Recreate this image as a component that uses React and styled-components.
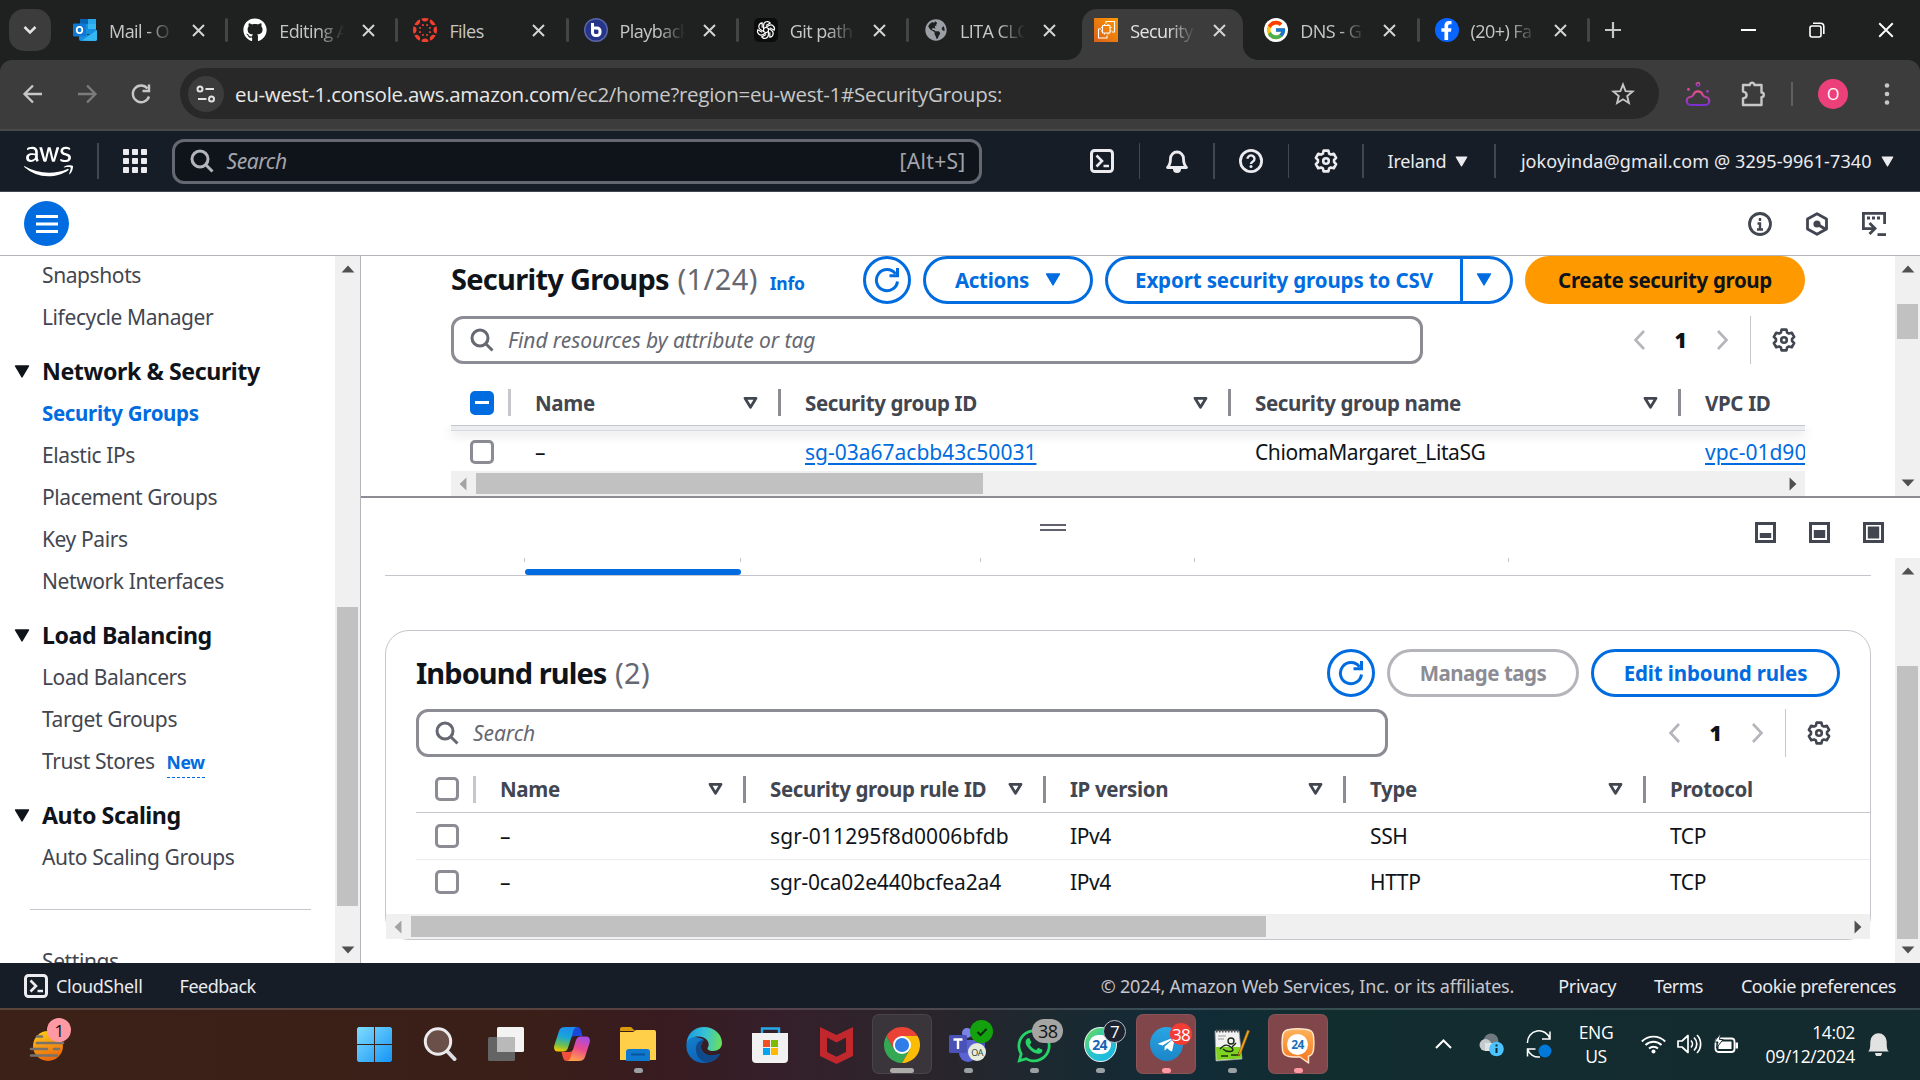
import React from "react";
import styled, { createGlobalStyle, css } from "styled-components";
import { FaGithub, FaAws, FaWhatsapp, FaFacebookF, FaTelegramPlane, FaGlobeAmericas } from "react-icons/fa";
import { FcGoogle } from "react-icons/fc";

const ember = `"Noto Sans", "Open Sans", sans-serif`;
const segoe = `"Open Sans", "Noto Sans", sans-serif`;

const Global = createGlobalStyle`
  * { box-sizing: border-box; }
  html, body { margin: 0; padding: 0; background: #fff; }
  body { width: 1920px; height: 1080px; overflow: hidden; }
  svg { display: block; flex: none; }
`;

const Screen = styled.div`
  width: 1920px;
  height: 1080px;
  display: flex;
  flex-direction: column;
  overflow: hidden;
  background: #fff;
  font-family: ${ember};
  font-size: 21px;
  letter-spacing: -0.4px;
  color: #0f141a;
  white-space: nowrap;
`;

/* ---------- Browser chrome ---------- */

const TabStrip = styled.div`
  height: 60px;
  flex: none;
  display: flex;
  align-items: flex-start;
  background: #1f2120;
  font-family: ${segoe};
`;
const TabSearch = styled.div`
  width: 42px;
  height: 42px;
  margin: 9px 7px 0 9px;
  border-radius: 15px;
  background: #3c3c3c;
  display: grid;
  place-items: center;
`;
const Tab = styled.div`
  position: relative;
  width: 170.2px;
  height: 51px;
  margin-top: 9px;
  padding: 0 0 9px 15px;
  display: flex;
  align-items: center;
  color: ${(p) => (p.$active ? "#e3e3e3" : "#c7c7c7")};
`;
const ActiveShape = styled.svg`
  position: absolute;
  left: -12px;
  top: 0;
`;
const TabIcon = styled.span`
  position: relative;
  width: 24px;
  height: 24px;
  display: grid;
  place-items: center;
`;
const TabTitle = styled.span`
  position: relative;
  margin-left: 12px;
  width: 76px;
  overflow: hidden;
  font-size: 18px;
  line-height: 30px;
  padding-top: 2px;
  letter-spacing: -0.55px;
  ${(p) => p.$fade && css`mask-image: linear-gradient(90deg, #000 50%, transparent 86%);`}
`;
const TabClose = styled.span`
  position: relative;
  margin-left: 7px;
`;
const TabDivider = styled.span`
  width: 3px;
  height: 24px;
  margin-left: auto;
  border-radius: 2px;
  background: #444645;
  visibility: ${(p) => (p.$hidden ? "hidden" : "visible")};
`;
const NewTab = styled.div`
  margin: 22px 0 0 15px;
`;
const WindowButtons = styled.div`
  margin-left: auto;
  height: 60px;
  display: flex;
  & > span {
    width: 68.5px;
    display: grid;
    place-items: center;
  }
`;
const ToolbarBack = styled.div`
  flex: none;
  background: #1f2120;
`;
const Toolbar = styled.div`
  height: 71px;
  display: flex;
  align-items: center;
  padding: 0 0 2px 20px;
  background: #3c3c3c;
  border-bottom: 2px solid #474a49;
  border-radius: 12px 12px 0 0;
`;
const NavIcons = styled.div`
  display: flex;
  gap: 28px;
  width: 160px;
`;
const Omnibox = styled.div`
  width: 1479px;
  height: 51px;
  padding: 0 24px 0 8px;
  display: flex;
  align-items: center;
  border-radius: 26px;
  background: #282828;
  font-family: ${segoe};
  font-size: 20.5px;
  letter-spacing: -0.27px;
  color: #c7c7c7;
  b {
    font-weight: 400;
    color: #e8e8e8;
  }
  & > svg {
    margin-left: auto;
  }
`;
const SiteInfo = styled.span`
  width: 36px;
  height: 36px;
  margin-right: 11px;
  border-radius: 50%;
  background: #3c3c3c;
  display: grid;
  place-items: center;
`;
const ToolbarRight = styled.div`
  flex: 1;
  display: flex;
  align-items: center;
  padding-left: 26px;
`;
const Bar = styled.i`
  width: ${(p) => p.$w || 1.5}px;
  height: ${(p) => p.$h}px;
  margin: 0 ${(p) => p.$r || 0}px 0 ${(p) => p.$l || 0}px;
  background: ${(p) => p.$c || "#424650"};
  flex: none;
`;
const PuzzleIcon = styled.svg`
  margin-left: 28px;
`;
const Avatar = styled.span`
  width: 30px;
  height: 30px;
  margin: 0 36px 0 25px;
  border-radius: 50%;
  background: #ec407a;
  color: #fff;
  display: grid;
  place-items: center;
  font: 16px ${segoe};
`;

/* ---------- AWS header ---------- */

const AwsHeader = styled.header`
  height: 61px;
  flex: none;
  display: flex;
  align-items: center;
  padding-left: 24px;
  background: #161d26;
  border-bottom: 1px solid #424650;
  color: #ebebf0;
  font-size: 18px;
  letter-spacing: 0.1px;
`;
const HeaderSearch = styled.div`
  width: 810px;
  height: 45px;
  margin: 0 84px 0 25px;
  padding: 0 13px 0 15px;
  display: flex;
  align-items: center;
  border: 3px solid #656871;
  border-radius: 12px;
  background: #0f141a;
  color: #a4a4ad;
  font-size: 21px;
  em {
    margin-left: 13px;
    letter-spacing: -0.4px;
  }
  span {
    margin-left: auto;
    letter-spacing: 0.3px;
  }
`;
const HeaderIcon = styled.span`
  width: 73px;
  display: grid;
  place-items: center;
`;
const Menu = styled.span`
  display: flex;
  align-items: center;
  gap: 9px;
  margin-left: ${(p) => p.$l}px;
  letter-spacing: ${(p) => p.$ls || 0}px;
`;

const ServiceBar = styled.div`
  height: 64px;
  flex: none;
  display: flex;
  align-items: center;
  justify-content: space-between;
  padding: 0 34px 0 24px;
  border-bottom: 1px solid #b4b4bb;
`;
const MenuButton = styled.span`
  width: 45px;
  height: 45px;
  border-radius: 50%;
  background: #006ce0;
  display: grid;
  place-items: center;
`;
const ServiceIcons = styled.div`
  display: flex;
  gap: 33px;
`;

/* ---------- Body ---------- */

const Body = styled.div`
  height: 707px;
  flex: none;
  display: flex;
  overflow: hidden;
`;
const Nav = styled.nav`
  width: 335px;
  height: 707px;
  overflow: hidden;
  padding-left: 42px;
  color: #424650;
`;
const NavList = styled.div`
  margin-top: -2px;
`;
const NavItem = styled.div`
  height: 42px;
  line-height: 42px;
  ${(p) =>
    p.$active &&
    css`
      font-size: 20.5px;
      font-weight: 700;
      letter-spacing: -0.33px;
      color: #006ce0;
    `}
`;
const NewBadge = styled.span`
  display: inline-block;
  margin-left: 12px;
  line-height: 29px;
  font-size: 17.5px;
  font-weight: 700;
  color: #006ce0;
  border-bottom: 1.5px dashed #006ce0;
`;
const NavHeading = styled.div`
  height: 43px;
  margin: 11px 0 0 -28px;
  display: flex;
  align-items: center;
  gap: 12px;
  font-size: 23.2px;
  font-weight: 700;
  letter-spacing: -0.43px;
  color: #0f141a;
  svg {
    margin-top: 1px;
  }
`;
const NavRule = styled.div`
  width: 281px;
  height: 1px;
  margin: 31px 0 30px -12px;
  background: #c6c6cd;
`;
const VTrack = styled.div`
  width: 25px;
  flex: none;
  display: flex;
  flex-direction: column;
  align-items: center;
  background: #f0f0f0;
  padding: 9px 0;
`;
const VThumb = styled.div`
  width: 21px;
  height: ${(p) => p.$h}px;
  margin-top: ${(p) => p.$top}px;
  margin-bottom: auto;
  background: #c1c1c1;
`;
const HTrack = styled.div`
  height: 25px;
  display: flex;
  align-items: center;
  justify-content: space-between;
  padding: 0 5px;
  background: #f0f0f0;
`;
const HThumb = styled.div`
  width: ${(p) => p.$w}px;
  height: 21px;
  margin: 0 auto 0 6px;
  background: #c1c1c1;
`;
const Main = styled.main`
  flex: 1;
  min-width: 0;
  display: flex;
  flex-direction: column;
  border-left: 1px solid #b4b4bb;
`;
const TopPanel = styled.section`
  height: 242px;
  display: flex;
  border-bottom: 2px solid #8c8c94;
`;
const TopContent = styled.div`
  flex: 1;
  min-width: 0;
  padding: 0 90px;
`;
const TitleRow = styled.div`
  height: 48px;
  display: flex;
  align-items: center;
  gap: 12px;
`;
const Title = styled.h2`
  margin: ${(p) => p.$dy || 0}px auto 0 0;
  font-size: 29px;
  line-height: 46px;
  font-weight: 700;
  letter-spacing: ${(p) => p.$ls}px;
  span {
    margin-left: 8.5px;
    font-weight: 400;
    color: #656871;
    letter-spacing: 0.4px;
  }
  small {
    margin-left: 12px;
    font-size: 17.5px;
    letter-spacing: -0.2px;
    color: #006ce0;
  }
`;
const Button = styled.span`
  height: 48px;
  width: ${(p) => p.$w}px;
  display: flex;
  align-items: center;
  justify-content: center;
  gap: 16px;
  border: 3px solid ${(p) => (p.$kind === "disabled" ? "#b4b4bb" : p.$kind === "primary" ? "#ff9900" : "#006ce0")};
  border-radius: 24px;
  background: ${(p) => (p.$kind === "primary" ? "#ff9900" : "#fff")};
  color: ${(p) => (p.$kind === "disabled" ? "#8c8c94" : p.$kind === "primary" ? "#0f141a" : "#006ce0")};
  font-size: 20.5px;
  font-weight: 700;
  line-height: 28px;
  padding-bottom: 1px;
  letter-spacing: ${(p) => p.$ls ?? -0.36}px;
`;
const SplitButton = styled.div`
  display: flex;
  & > ${Button}:first-child {
    border-radius: 24px 0 0 24px;
    border-right: 0;
  }
  & > ${Button}:last-child {
    border-radius: 0 24px 24px 0;
    padding-right: 6px;
  }
`;
const FilterRow = styled.div`
  height: 48px;
  margin-top: 12px;
  display: flex;
  align-items: center;
`;
const Filter = styled.div`
  width: 972px;
  height: 48px;
  padding: 0 0 1px 16px;
  display: flex;
  align-items: center;
  gap: 14px;
  border: 3px solid #8c8c94;
  border-radius: 12px;
  color: #656871;
  font-style: italic;
  letter-spacing: -0.07px;
`;
const PagerRow = styled.div`
  margin-left: auto;
  display: flex;
  align-items: center;
  padding-right: 9px;
  font-weight: 700;
`;
const PageNumber = styled.b`
  width: 70px;
  text-align: center;
`;
const Spacer = styled.div`
  height: ${(p) => p.$h}px;
`;
const TableHead = styled.div`
  display: flex;
  align-items: center;
  height: ${(p) => p.$h}px;
  padding-bottom: ${(p) => p.$pb || 0}px;
  border-bottom: 1px solid #c6c6cd;
  overflow: hidden;
  font-size: 20.5px;
  font-weight: 700;
  color: #424650;
`;
const TableRow = styled.div`
  display: flex;
  align-items: center;
  height: ${(p) => p.$h}px;
  padding-top: ${(p) => p.$pt || 0}px;
  overflow: hidden;
  border-bottom: ${(p) => (p.$line ? "1px solid #ebebf0" : "0")};
`;
const CheckCell = styled.span`
  width: 60px;
  flex: none;
  padding-left: 19px;
  display: flex;
  align-items: center;
  justify-content: space-between;
`;
const Check = styled.span`
  width: 24px;
  height: 24px;
  border: 3px solid ${(p) => (p.$on ? "#006ce0" : "#8c8c94")};
  border-radius: 5px;
  background: ${(p) => (p.$on ? "#006ce0" : "#fff")};
  display: grid;
  place-items: center;
  &::after {
    content: "";
    width: 14px;
    height: 3px;
    background: ${(p) => (p.$on ? "#fff" : "transparent")};
  }
`;
const Cell = styled.span`
  width: ${(p) => p.$w}px;
  flex: none;
  padding-left: 24px;
  letter-spacing: ${(p) => p.$ls ?? -0.4}px;
  display: flex;
  align-items: center;
  & > svg {
    margin: 0 19px 0 auto;
  }
`;
const Link = styled.a`
  color: #006ce0;
  text-decoration: underline;
  text-decoration-thickness: 2px;
  text-underline-offset: 3px;
`;
const StickyShade = styled.div`
  height: 5px;
  background: #ebedf0;
  border-bottom: 1px solid #d5dae2;
  box-shadow: 0 3px 12px rgba(0, 7, 22, 0.16);
  clip-path: inset(0 -20px -18px -20px);
`;
const BottomPanel = styled.section`
  height: 465px;
  display: flex;
  flex-direction: column;
`;
const SplitBar = styled.div`
  height: 60px;
  display: flex;
  align-items: flex-start;
  justify-content: flex-end;
  padding: 24px 36px 0 0;
`;
const Handle = styled.div`
  width: 26px;
  height: 7px;
  margin: 2px 689px 0 0;
  border: solid #5f626c;
  border-width: 2px 0;
`;
const PanelSizes = styled.div`
  display: flex;
  gap: 33px;
`;
const SplitScroll = styled.div`
  flex: 1;
  display: flex;
  min-height: 0;
`;
const SplitContent = styled.div`
  flex: 1;
  min-width: 0;
  padding: 0 24px;
`;
const TabsEdge = styled.div`
  height: 18px;
  display: flex;
  border-bottom: 1px solid #c6c6cd;
`;
const EdgeTab = styled.span`
  width: ${(p) => p.$w}px;
  height: 17px;
  display: flex;
  align-items: flex-end;
  background: linear-gradient(#c6c6cd, #c6c6cd) right top / 1px 4px no-repeat;
  &::after {
    content: "";
    flex: 1;
    height: 6px;
    border-radius: 3px;
    background: ${(p) => (p.$active ? "#006ce0" : "transparent")};
  }
`;
const Card = styled.div`
  height: 310px;
  margin-top: 54px;
  border: 1px solid #c6c6cd;
  border-radius: 24px;
`;
const CardInner = styled.div`
  height: 283px;
  padding: 18px 0 0 30px;
`;
const CardControls = styled.div`
  padding-right: 30px;
`;

/* ---------- AWS footer ---------- */

const Footer = styled.footer`
  height: 45px;
  flex: none;
  display: flex;
  align-items: center;
  padding: 1px 24px 0;
  background: #161d26;
  color: #ebebf0;
  font-size: 18px;
`;
const FooterText = styled.span`
  margin-left: ${(p) => (p.$push ? "auto" : `${p.$l}px`)};
  padding-bottom: ${(p) => p.$up || 0}px;
  letter-spacing: ${(p) => p.$ls ?? -0.3}px;
  color: ${(p) => (p.$push ? "#c6c6cd" : "inherit")};
`;

/* ---------- Windows taskbar ---------- */

const Taskbar = styled.div`
  height: 72px;
  flex: none;
  display: flex;
  align-items: flex-start;
  padding-top: 4px;
  border-top: 2px solid rgba(255, 255, 255, 0.16);
  background: linear-gradient(90deg, #3b2117 0, #3a1f18 520px, #381b20 660px, #34202b 790px, #29252c 940px, #1b2930 1060px, #112b38 1180px, #112d2e 1330px, #132c30 1500px, #132a2e 1920px);
  font-family: ${segoe};
  color: #fff;
`;
const Weather = styled.div`
  position: relative;
  width: 344px;
  flex: none;
  padding: 16px 0 0 29px;
`;
const Badge = styled.span`
  position: absolute;
  left: ${(p) => p.$x}px;
  top: ${(p) => p.$y}px;
  min-width: ${(p) => p.$s}px;
  height: ${(p) => p.$s}px;
  padding: 0 ${(p) => p.$p || 0}px;
  border-radius: ${(p) => p.$s / 2}px;
  background: ${(p) => p.$bg};
  color: ${(p) => p.$c};
  border: ${(p) => p.$border || "0"};
  display: grid;
  place-items: center;
  font-size: ${(p) => p.$fs || 17}px;
  line-height: 1;
  letter-spacing: -0.6px;
`;
const Tile = styled.div`
  position: relative;
  width: 60px;
  height: 60px;
  flex: none;
  margin-right: 6px;
  padding-top: 12px;
  display: flex;
  flex-direction: column;
  align-items: center;
  justify-content: space-between;
  border-radius: 7px;
  background: ${(p) => p.$bg || "transparent"};
  border: 1px solid ${(p) => (p.$bg ? "rgba(255,255,255,.08)" : "transparent")};
`;
const Running = styled.i`
  width: ${(p) => p.$w || 9}px;
  height: 5px;
  border-radius: 3px;
  background: ${(p) => p.$c || "#9ba0a3"};
`;
const Tray = styled.div`
  flex: 1;
  height: 60px;
  display: flex;
  align-items: center;
  padding-left: 85px;
  font-size: 17.5px;
  line-height: 24px;
  letter-spacing: -0.35px;
`;
const TraySlot = styled.span`
  width: ${(p) => p.$w || 48}px;
  flex: none;
  display: grid;
  justify-items: ${(p) => p.$j || "center"};
`;

/* ---------- Icons ---------- */

const Close = ({ s = 13, c = "#d4d4d4", w = 2 }) => (
  <svg width={s} height={s} viewBox="0 0 13 13"><path d="M1 1 12 12M12 1 1 12" stroke={c} strokeWidth={w} fill="none" /></svg>
);
const Caret = ({ c = "currentColor", w = 16, h = 13 }) => (
  <svg width={w} height={h} viewBox="0 0 16 13"><path d="M1.5 1h13L8 12z" fill={c} stroke={c} strokeWidth="1.4" strokeLinejoin="round" /></svg>
);
const Sort = () => (
  <svg width="17" height="14" viewBox="0 0 17 14"><path d="M3 2.3h11L8.5 11.2z" fill="none" stroke="#424650" strokeWidth="2.8" strokeLinejoin="round" /></svg>
);
const Search = ({ c = "#656871" }) => (
  <svg width="24" height="24" viewBox="0 0 24 24"><g fill="none" stroke={c} strokeWidth="3"><circle cx="10" cy="10" r="8" /><path d="m15.5 15.5 7 7" /></g></svg>
);
const gearPath = (() => {
  const profile = [[-13, 10.6], [13, 10.6], [23, 8.1], [37, 8.1]];
  let d = "";
  for (let k = 0; k < 6; k++) {
    profile.forEach(([off, r], i) => {
      const a = ((k * 60 + off - 90) * Math.PI) / 180;
      d += `${k === 0 && i === 0 ? "M" : "L"}${(12 + r * Math.cos(a)).toFixed(2)} ${(12 + r * Math.sin(a)).toFixed(2)}`;
    });
  }
  return d + "Z";
})();
const Gear = ({ c = "#424650" }) => (
  <svg width="24" height="24" viewBox="0 0 24 24"><g fill="none" stroke={c} strokeWidth="2.6" strokeLinejoin="round"><path d={gearPath} /><circle cx="12" cy="12" r="2.8" /></g></svg>
);
const Shell = () => (
  <svg width="24" height="24" viewBox="0 0 24 24"><rect x="1.5" y="1.5" width="21" height="21" rx="3" fill="none" stroke="#ebebf0" strokeWidth="3" /><path d="m6.5 6.5 5.5 5.5-5.5 5.5M13.5 17h5.5" fill="none" stroke="#ebebf0" strokeWidth="2.6" /></svg>
);
const Arrow = ({ r = 0 }) => (
  <svg width="14" height="8" viewBox="0 0 12 7" transform={`rotate(${r})`}><path d="M6 .5 11.6 6.5H.4z" fill={r === -90 ? "#a3a3a3" : "#505050"} /></svg>
);
const Refresh = () => (
  <svg width="26" height="26" viewBox="0 0 26 26"><g fill="none" stroke="#006ce0" strokeWidth="3"><path d="M23.5 14.5A10.6 10.6 0 1 1 21.5 6.8" /><path d="M23.5 1v7.7h-8" /></g></svg>
);
const Chevron = ({ right }) => (
  <svg width="13" height="20" viewBox="0 0 13 20"><path d={right ? "m2 1 8.5 9-8.5 9" : "M11 1 2.5 10l8.5 9"} fill="none" stroke="#b4b4bb" strokeWidth="2.6" /></svg>
);
const PanelIcon = ({ y, h }) => (
  <svg width="21" height="21" viewBox="0 0 21 21"><rect x="1.5" y="1.5" width="18" height="18" fill="none" stroke="#424650" strokeWidth="3" /><rect x="4.8" y={y} width="11.4" height={h} fill="#424650" /></svg>
);

const Outlook = () => (
  <svg width="24" height="24" viewBox="0 0 24 24">
    <rect x="7" y="1" width="16" height="15" rx="1" fill="#1490df" /><path d="M7 1h8v5H7z" fill="#0a63b0" /><path d="M15 6h8v5h-8z" fill="#35b8f1" /><path d="M15 1h8v5h-8z" fill="#28a8ea" />
    <path d="M6 12l9 5 9-5v9a2 2 0 0 1-2 2H8a2 2 0 0 1-2-2z" fill="#1a8fe0" /><path d="m24 12-15 10.500L22 23a2 2 0 0 0 2-2z" fill="#35b8f1" />
    <rect x="0" y="5.500" width="13" height="13" rx="1.200" fill="#0f78d4" /><ellipse cx="6.500" cy="12" rx="2.800" ry="3.200" fill="none" stroke="#fff" strokeWidth="1.700" />
  </svg>
);
const CanvasLogo = () => (
  <svg width="24" height="24" viewBox="0 0 24 24" fill="#f23f2f">
    {[0, 45, 90, 135, 180, 225, 270, 315].map((a) => (
      <g key={a} transform={`rotate(${a} 12 12)`}><path d="M8.300.600a12 12 0 0 1 7.400 0A3.800 3.800 0 0 1 8.300.600z" /><circle cx="12" cy="6.600" r="1" transform="rotate(22.500 12 12)" /></g>
    ))}
  </svg>
);
const BlueButton = () => (
  <svg width="24" height="24" viewBox="0 0 24 24"><circle cx="12" cy="12" r="12" fill="#5a68a8" /><circle cx="12" cy="12" r="10.600" fill="#26358a" /><path d="M8.500 5v9.500a3 3 0 0 0 3 3h1.500a3 3 0 0 0 3-3v-1.500a3 3 0 0 0-3-3H9" fill="none" stroke="#fff" strokeWidth="3" /></svg>
);
const Knot = () => (
  <svg width="24" height="24" viewBox="0 0 24 24"><rect width="24" height="24" rx="5" fill="#0c0c0c" />
    <g fill="none" stroke="#fff" strokeWidth="1.200">{[0, 60, 120, 180, 240, 300].map((a) => <path key={a} transform={`rotate(${a} 12 12)`} d="M9.600 13.200V7.200a3.700 3.700 0 0 1 6.700-2.100L12 7.600" />)}</g></svg>
);
const Ec2 = () => (
  <svg width="24" height="24" viewBox="0 0 24 24"><defs><linearGradient id="ec2" x1="0" y1="1" x2="1" y2="0"><stop stopColor="#d9601a" /><stop offset="1" stopColor="#f90" /></linearGradient></defs><rect width="24" height="24" fill="url(#ec2)" />
    <g fill="none" stroke="#fff" strokeWidth="1.100"><rect x="8.500" y="7.500" width="7.500" height="7.500" rx=".5" /><path d="M10.500 7.500V6M14 7.500V6M10.500 16.500V15M14 16.500V15M7 9.500h1.500M7 13h1.500M16 9.500h1.500M16 13h1.500M12 5.500V3.500h8.500v10.500h-2.500M7 11H4.500v9h8.500v-2.500" /></g></svg>
);
const Favicon = styled.span`
  width: 24px;
  height: 24px;
  border-radius: 50%;
  display: grid;
  place-items: center;
  overflow: hidden;
  background: ${(p) => p.$bg};
`;

const tabs = [
  ["Mail - O", <Outlook />, 1], ["Editing A", <FaGithub size={24} color="#fff" />, 1], ["Files", <CanvasLogo />, 0],
  ["Playback", <BlueButton />, 1], ["Git path", <Knot />, 1], ["LITA CLO", <FaGlobeAmericas size={22} color="#9aa0a6" />, 1],
  ["Security", <Ec2 />, 1], ["DNS - G", <Favicon $bg="#fff"><FcGoogle size={22} /></Favicon>, 1],
  ["(20+) Fa", <Favicon $bg="#0866ff"><FaFacebookF size={19} color="#fff" /></Favicon>, 1],
];

function Browser() {
  return (
    <>
      <TabStrip>
        <TabSearch><svg width="16" height="16" viewBox="0 0 16 16"><path d="m2.500 5 5.500 5.500L13.500 5" fill="none" stroke="#e3e3e3" strokeWidth="2.500" /></svg></TabSearch>
        {tabs.map(([t, icon, fade], i) => (
          <Tab key={t} $active={i === 6}>
            {i === 6 && <ActiveShape width="191" height="51" viewBox="0 0 191 51"><path d="M0 51a15 15 0 0 0 15-15V15A15 15 0 0 1 30 0h131a15 15 0 0 1 15 15v21a15 15 0 0 0 15 15z" fill="#3c3c3c" /></ActiveShape>}
            <TabIcon>{icon}</TabIcon>
            <TabTitle $fade={!!fade}>{t}</TabTitle>
            <TabClose><Close /></TabClose>
            <TabDivider $hidden={i === 5 || i === 6} />
          </Tab>
        ))}
        <NewTab><svg width="16" height="16" viewBox="0 0 16 16"><path d="M8 0v16M0 8h16" stroke="#c7c7c7" strokeWidth="2.200" /></svg></NewTab>
        <WindowButtons>
          <span><svg width="15" height="3"><rect width="15" height="2" fill="#fff" /></svg></span>
          <span><svg width="16" height="16" viewBox="0 0 16 16"><g fill="none" stroke="#fff" strokeWidth="1.600"><rect x="1" y="4" width="11" height="11" rx="2" /><path d="M4 1.200h7.500a3.300 3.300 0 0 1 3.300 3.300V12" /></g></svg></span>
          <span><Close s={16} c="#fff" w={1.5} /></span>
        </WindowButtons>
      </TabStrip>
      <ToolbarBack>
        <Toolbar>
          <NavIcons>
            <svg width="26" height="26" viewBox="0 0 26 26"><path d="M22 13H5M13 4.500 4.500 13l8.500 8.500" fill="none" stroke="#c7c7c7" strokeWidth="2.300" /></svg>
            <svg width="26" height="26" viewBox="0 0 26 26"><path d="M4 13h17M13 4.500l8.500 8.500-8.500 8.500" fill="none" stroke="#7c7c7c" strokeWidth="2.300" /></svg>
            <svg width="26" height="26" viewBox="0 0 26 26"><g fill="none" stroke="#c7c7c7" strokeWidth="2.400"><path d="M21 15.500A8.300 8.300 0 1 1 19.500 7.500" /><path d="M21 3.500V10h-6.500" /></g></svg>
          </NavIcons>
          <Omnibox>
            <SiteInfo><svg width="20" height="20" viewBox="0 0 20 20"><g fill="none" stroke="#e3e3e3" strokeWidth="2"><circle cx="4" cy="5" r="2.500" /><path d="M9.500 5H18M2 15h8.500" /><circle cx="15.500" cy="15" r="2.500" /></g></svg></SiteInfo>
            <span><b>eu-west-1.console.aws.amazon.com</b>/ec2/home?region=eu-west-1#SecurityGroups:</span>
            <svg width="24" height="24" viewBox="0 0 24 24"><path d="m12 2.500 2.600 6.600 7 .500-5.400 4.500 1.700 6.900L12 17.300l-5.900 3.700 1.700-6.900L2.400 9.600l7-.500z" fill="none" stroke="#c7c7c7" strokeWidth="1.900" /></svg>
          </Omnibox>
          <ToolbarRight>
            <svg width="26" height="26" viewBox="0 0 26 26"><defs><linearGradient id="cl" x2="0" y2="1"><stop stopColor="#e8508a" /><stop offset="1" stopColor="#7a2fd0" /></linearGradient></defs><g fill="none" stroke="url(#cl)" strokeWidth="2.200"><path d="M6 24a4 4 0 0 1-.500-8c1.500 0 2-.5 3-2.500a4.800 4.800 0 0 1 9 0c1 2 1.500 2.500 3 2.500a4 4 0 0 1-.500 8z" /><circle cx="13" cy="3.500" r="1.700" strokeWidth="1.500" /><path d="M3.500 7v3M2 8.500h3M22.500 9v3M21 10.500h3" strokeWidth="1.700" /></g></svg>
            <PuzzleIcon width="28" height="28" viewBox="0 0 28 28"><path d="M4 5h6.800a2.300 2.300 0 0 1 4.600 0H22.500v7.500a2.300 2.300 0 0 1 0 4.600V25H4v-6.600c2.600-.3 3.600-1.700 3.600-3.400S6.600 11.900 4 11.600z" fill="none" stroke="#c7c7c7" strokeWidth="2.400" strokeLinejoin="round" /></PuzzleIcon>
            <Bar $h={24} $w={2} $c="#5f6160" $l={24} />
            <Avatar>O</Avatar>
            <svg width="6" height="26" viewBox="0 0 6 26" fill="#c7c7c7"><circle cx="3" cy="4.500" r="2.300" /><circle cx="3" cy="13" r="2.300" /><circle cx="3" cy="21.500" r="2.300" /></svg>
          </ToolbarRight>
        </Toolbar>
      </ToolbarBack>
    </>
  );
}

function Header() {
  return (
    <>
      <AwsHeader>
        <FaAws size={49} color="#fff" />
        <Bar $h={36} $l={24} $r={24} />
        <svg width="24" height="24" viewBox="0 0 24 24" fill="#ebebf0">{[0, 9, 18].map((x) => [0, 9, 18].map((y) => <rect key={x + "-" + y} x={x} y={y} width="6" height="6" rx=".8" />))}</svg>
        <HeaderSearch><Search c="#b4b4bb" /><em>Search</em><span>[Alt+S]</span></HeaderSearch>
        <HeaderIcon><Shell /></HeaderIcon><Bar $h={36} />
        <HeaderIcon><svg width="24" height="24" viewBox="0 0 24 24"><path d="M2.500 18.500c2-2 3-3.500 3-9a6.500 6.500 0 0 1 13 0c0 5.500 1 7 3 9z" fill="none" stroke="#ebebf0" strokeWidth="2.800" strokeLinejoin="round" /><path d="M8 20h8a4 4 0 0 1-8 0z" fill="#ebebf0" /></svg></HeaderIcon><Bar $h={36} />
        <HeaderIcon><svg width="24" height="24" viewBox="0 0 24 24"><g fill="none" stroke="#ebebf0" strokeWidth="2.800"><circle cx="12" cy="12" r="10.600" /><path d="M8.500 9.800a3.500 3.300 0 1 1 5.400 2.700c-1.300.8-1.900 1.300-1.900 2.600" strokeWidth="2.400" /></g><circle cx="12" cy="17.600" r="1.500" fill="#ebebf0" /></svg></HeaderIcon><Bar $h={34} />
        <HeaderIcon><Gear c="#ebebf0" /></HeaderIcon><Bar $h={34} />
        <Menu $l={24} $ls={-0.2}>Ireland <Caret w={13} h={11} /></Menu>
        <Bar $h={34} $l={26} />
        <Menu $l={25} $ls={0.1}>jokoyinda@gmail.com @ 3295-9961-7340 <Caret w={13} h={11} /></Menu>
      </AwsHeader>
      <ServiceBar>
        <MenuButton><svg width="22" height="18" viewBox="0 0 22 18"><path d="M0 1.500h22M0 9h22M0 16.500h22" stroke="#fff" strokeWidth="3" /></svg></MenuButton>
        <ServiceIcons>
          <svg width="24" height="24" viewBox="0 0 24 24"><circle cx="12" cy="12" r="10.500" fill="none" stroke="#424650" strokeWidth="2.800" /><path d="M12 6v3M9.500 11.500H12V17M9 17.500h6" stroke="#424650" strokeWidth="2.400" fill="none" /></svg>
          <svg width="24" height="24" viewBox="0 0 24 24"><path d="M12 1.700 21.500 7v10L12 22.300 2.500 17V7z" fill="none" stroke="#424650" strokeWidth="2.800" strokeLinejoin="round" /><circle cx="12" cy="12" r="3.600" fill="#424650" /><path d="m12 12 9 5.500" stroke="#424650" strokeWidth="3" /></svg>
          <svg width="24" height="24" viewBox="0 0 24 24"><g fill="none" stroke="#424650" strokeWidth="2.800"><path d="M22.600 12V1.400H1.400v15.200h10M7.500 11l5.500 5.500L7.500 22" /><path d="M15.500 22.600H24" /><path d="M5 6h14" strokeDasharray="3 2" strokeWidth="3" /></g></svg>
        </ServiceIcons>
      </ServiceBar>
    </>
  );
}

const Heading = ({ children }) => <NavHeading><Caret />{children}</NavHeading>;

function Sidebar() {
  return (
    <>
      <Nav>
        <NavList>
          {["Snapshots", "Lifecycle Manager"].map((t) => <NavItem key={t}>{t}</NavItem>)}
          <Heading>Network &amp; Security</Heading>
          <NavItem $active>Security Groups</NavItem>
          {["Elastic IPs", "Placement Groups", "Key Pairs", "Network Interfaces"].map((t) => <NavItem key={t}>{t}</NavItem>)}
          <Heading>Load Balancing</Heading>
          {["Load Balancers", "Target Groups"].map((t) => <NavItem key={t}>{t}</NavItem>)}
          <NavItem>Trust Stores<NewBadge>New</NewBadge></NavItem>
          <Heading>Auto Scaling</Heading>
          <NavItem>Auto Scaling Groups</NavItem>
          <NavRule />
          <NavItem>Settings</NavItem>
        </NavList>
      </Nav>
      <VTrack><Arrow /><VThumb $h={299} $top={334} /><Arrow r={180} /></VTrack>
    </>
  );
}

const Paging = () => (
  <PagerRow><Chevron /><PageNumber>1</PageNumber><Chevron right /><Bar $h={48} $l={21} $r={21} $c="#c6c6cd" /><Gear /></PagerRow>
);

const HeadCell = ({ w, children, plain }) => (
  <Cell $w={w} $ls={-0.35}>{children}{!plain && <><Sort /><Bar $w={3} $h={27} $c="#8c8c94" /></>}</Cell>
);

function SecurityGroups() {
  return (
    <TopPanel>
      <TopContent>
        <TitleRow>
          <Title $ls={-0.72} $dy={1}>Security Groups<span>(1/24)</span><small>Info</small></Title>
          <Button $w={48}><Refresh /></Button>
          <Button $w={170} $ls={-0.3}>Actions <Caret /></Button>
          <SplitButton><Button $w={355} $ls={-0.12}>Export security groups to CSV</Button><Button $w={53}><Caret /></Button></SplitButton>
          <Button $w={280} $kind="primary">Create security group</Button>
        </TitleRow>
        <FilterRow>
          <Filter><Search />Find resources by attribute or tag</Filter>
          <Paging />
        </FilterRow>
        <Spacer $h={18} />
        <TableHead $h={44} $pb={2}>
          <CheckCell><Check $on /><Bar $w={3} $h={27} $c="#c6c6cd" /></CheckCell>
          <HeadCell w={270}>Name</HeadCell>
          <HeadCell w={450}>Security group ID</HeadCell>
          <HeadCell w={450}>Security group name</HeadCell>
          <HeadCell w={150} plain>VPC ID</HeadCell>
        </TableHead>
        <StickyShade />
        <TableRow $h={40} $pt={1}>
          <CheckCell><Check /></CheckCell>
          <Cell $w={270}>–</Cell>
          <Cell $w={450} $ls={0}><Link>sg-03a67acbb43c50031</Link></Cell>
          <Cell $w={450} $ls={-0.43}>ChiomaMargaret_LitaSG</Cell>
          <Cell $w={150} $ls={0}><Link>vpc-01d907</Link></Cell>
        </TableRow>
        <HTrack><Arrow r={-90} /><HThumb $w={507} /><Arrow r={90} /></HTrack>
      </TopContent>
      <VTrack><Arrow /><VThumb $h={35} $top={31} /><Arrow r={180} /></VTrack>
    </TopPanel>
  );
}

const rules = [
  { id: "sgr-011295f8d0006bfdb", type: "SSH", ls: 0.1 },
  { id: "sgr-0ca02e440bcfea2a4", type: "HTTP", ls: -0.13 },
];

function InboundRules() {
  return (
    <BottomPanel>
      <SplitBar>
        <Handle />
        <PanelSizes><PanelIcon y={11} h={5} /><PanelIcon y={8} h={8} /><PanelIcon y={4.5} h={12} /></PanelSizes>
      </SplitBar>
      <SplitScroll>
        <SplitContent>
          <TabsEdge>
            {[140, 216, 240, 214, 314].map((w, i) => <EdgeTab key={w} $w={w} $active={i === 1} />)}
          </TabsEdge>
          <Card>
            <CardInner>
              <CardControls>
                <TitleRow>
                  <Title $ls={-0.93} $dy={-1}>Inbound rules<span>(2)</span></Title>
                  <Button $w={48}><Refresh /></Button>
                  <Button $w={192} $kind="disabled" $ls={-0.5}>Manage tags</Button>
                  <Button $w={249} $ls={-0.14}>Edit inbound rules</Button>
                </TitleRow>
                <FilterRow><Filter><Search />Search</Filter><Paging /></FilterRow>
              </CardControls>
              <Spacer $h={10} />
              <TableHead $h={46} $pb={1}>
                <CheckCell><Check /><Bar $w={3} $h={27} $c="#c6c6cd" /></CheckCell>
                <HeadCell w={270}>Name</HeadCell>
                <HeadCell w={300}>Security group rule ID</HeadCell>
                <HeadCell w={300}>IP version</HeadCell>
                <HeadCell w={300}>Type</HeadCell>
                <HeadCell w={200} plain>Protocol</HeadCell>
              </TableHead>
              {rules.map(({ id, type, ls }, i) => (
                <TableRow key={id} $h={i ? 43 : 47} $line={!i}>
                  <CheckCell><Check /></CheckCell>
                  <Cell $w={270}>–</Cell>
                  <Cell $w={300} $ls={ls}>{id}</Cell>
                  <Cell $w={300}>IPv4</Cell>
                  <Cell $w={300}>{type}</Cell>
                  <Cell $w={200}>TCP</Cell>
                </TableRow>
              ))}
            </CardInner>
            <HTrack><Arrow r={-90} /><HThumb $w={855} /><Arrow r={90} /></HTrack>
          </Card>
        </SplitContent>
        <VTrack><Arrow /><VThumb $h={273} $top={91} /><Arrow r={180} /></VTrack>
      </SplitScroll>
    </BottomPanel>
  );
}

/* ---------- Taskbar artwork ---------- */

const Start = () => (
  <svg width="35" height="35" viewBox="0 0 35 35"><defs><linearGradient id="win" x2="1" y2="1"><stop stopColor="#7fdcff" /><stop offset="1" stopColor="#1595f5" /></linearGradient></defs><g fill="url(#win)"><path d="M1.500 0H17v17H0V1.500zM18 0h15.500L35 1.500V17H18zM0 18h17v17H1.500L0 33.500zM18 18h17v15.500L33.500 35H18z" /></g></svg>
);
const Magnifier = () => (
  <svg width="34" height="34" viewBox="0 0 34 34"><path d="m23 23 8.500 9" stroke="#dcdce4" strokeWidth="4" strokeLinecap="round" /><circle cx="15" cy="14.500" r="12.700" fill="#6a5048" stroke="#ececee" strokeWidth="3" /></svg>
);
const TaskView = () => (
  <svg width="36" height="34" viewBox="0 0 36 34"><rect y="10" width="27" height="24" rx="1.500" fill="#646464" /><rect x="9" width="27" height="25" rx="1.500" fill="#f3f3f3" /><path d="M9 10h18v15H9z" fill="#b9b9b9" /></svg>
);
const Copilot = () => (
  <svg width="36" height="34" viewBox="0 0 36 34"><defs>
    <linearGradient id="cp1" x1=".5" y1="0" x2=".3" y2="1"><stop stopColor="#1c8cf0" /><stop offset=".4" stopColor="#1aa6d8" /><stop offset=".75" stopColor="#6fc04e" /><stop offset="1" stopColor="#f5c800" /></linearGradient>
    <linearGradient id="cp2" x1=".7" y1="0" x2=".4" y2="1"><stop stopColor="#a44be8" /><stop offset=".5" stopColor="#ec4c8c" /><stop offset="1" stopColor="#ffa04a" /></linearGradient></defs>
    <path d="M17 0h6c2.500 0 3.500 1.500 4.200 4l1.300 5h-7c-3 0-4 1-4.700 3z" fill="#1a48d8" />
    <path d="M19 34h-6c-2.500 0-3.500-1.500-4.200-4L7.500 25h7c3 0 4-1 4.700-3z" fill="#f0503c" />
    <path d="M11 0h12c-2 .3-3 1.500-3.700 4l-5 16c-.9 3-2.300 4.500-5 4.500H4c-3.500 0-4.500-3-3.700-6L5 4c.9-2.600 2.800-4 6-4z" fill="url(#cp1)" />
    <path d="M25 34H13c2-.3 3-1.500 3.700-4l5-16c.9-3 2.300-4.500 5-4.500H32c3.500 0 4.500 3 3.700 6L31 30c-.9 2.600-2.800 4-6 4z" fill="url(#cp2)" />
  </svg>
);
const Explorer = () => (
  <svg width="36" height="34" viewBox="0 0 36 34"><path d="M0 2a2 2 0 0 1 2-2h9l4 4H0z" fill="#d99a0c" /><path d="M0 33V5h13l3-2h18a2 2 0 0 1 2 2v28z" fill="#ffcf4a" /><path d="M6 34V25a3 3 0 0 1 3-3h18a3 3 0 0 1 3 3v9z" fill="#0f79d0" /><path d="M11 27.500h14" stroke="#0a559c" strokeWidth="2" /></svg>
);
const Edge = () => (
  <svg width="36" height="36" viewBox="0 0 36 36"><defs><linearGradient id="ed" x1="0" y1=".4" x2="1" y2=".5"><stop stopColor="#1a9be0" /><stop offset=".5" stopColor="#35c1d8" /><stop offset="1" stopColor="#6be05a" /></linearGradient><linearGradient id="ed2" x2=".6" y2="1"><stop stopColor="#1580cc" /><stop offset="1" stopColor="#0d5fb4" /></linearGradient></defs>
    <path d="M1 14C-2 26 6 36 18 36c7 0 12-3 15.500-8 .5-.8-.3-1.300-1-.9-9 3.900-17.500-.600-17.500-7.100 0-3 1-5 3-7-8-5-15-3-17 1z" fill="url(#ed2)" />
    <path d="M10 20c-1 8 4 15 12 15.500 5-1 9-4 11.500-7.500.5-.8-.3-1.300-1-.9-9 3.900-17.500-.6-17.500-7.100 0-3 1-5 3-7-4 0-7 2.500-8 7z" fill="#114a8b" />
    <path d="M.5 16C1.500 6 9 0 18 0c10 0 18 7 18 16 0 5-4 8-9 8-4 0-5.500-1.500-5.500-2.500s1.200-1.500 1.200-4c0-4-4-8-10.200-8C6.500 9.500 2 12 .5 16z" fill="url(#ed)" /></svg>
);
const Store = () => (
  <svg width="36" height="36" viewBox="0 0 36 36"><path d="M10 8V1.500h17V8" fill="none" stroke="#27a8e8" strokeWidth="2.400" /><path d="M0 6h36v26a4 4 0 0 1-4 4H4a4 4 0 0 1-4-4z" fill="#f1f1f1" /><path d="M11 13h7v7h-7z" fill="#f25022" /><path d="M19 13h7v7h-7z" fill="#7fba00" /><path d="M11 21h7v7h-7z" fill="#00a4ef" /><path d="M19 21h7v7h-7z" fill="#ffb900" /></svg>
);
const Shield = () => (
  <svg width="33" height="37" viewBox="0 0 33 37"><path d="M0 0 16.500 8 33 0v29l-16.500 8L0 29zM7 10.500v14.500l9.500 4.700L26 25V10.500L16.500 15.500z" fill="#c1282d" fillRule="evenodd" /></svg>
);
const Chrome = () => (
  <svg width="36" height="36" viewBox="2 2 44 44"><path d="M4.950 13a22 22 0 0 1 38.100 0H24L14.470 29.500z" fill="#ea4335" /><path d="M4.950 13 14.470 29.500 24 24l9.530 5.500L24 46A22 22 0 0 1 4.950 13z" fill="#34a853" /><path d="M43.050 13H24v11l9.530 5.500L24 46a22 22 0 0 0 19.050-33z" fill="#fbbc05" /><circle cx="24" cy="24" r="11" fill="#fff" /><circle cx="24" cy="24" r="8.700" fill="#2f7de9" /></svg>
);
const Teams = () => (
  <svg width="38" height="36" viewBox="0 0 38 36"><circle cx="18" cy="6" r="5" fill="#7b83eb" /><path d="M10 13h18v13a9 9 0 0 1-18 0z" fill="#5b63d3" /><path d="M26 12h10v12a7 7 0 0 1-8 7z" fill="#4b53bc" /><rect y="8" width="18" height="18" rx="1.500" fill="#4a52b8" /><path d="M4.500 12.500h9M9 12.500v9.500" stroke="#fff" strokeWidth="2.400" /></svg>
);
const Bubble = styled.span`
  width: 33px;
  height: 35px;
  border-radius: 50%;
  border: 1.5px solid #e8f4f4;
  background: linear-gradient(135deg, #6fe04a, #28c3c8 50%, #17b6f0);
  display: grid;
  place-items: center;
  span {
    padding: 2px 4px 2px 3px;
    border-radius: 9px;
    background: #fff;
    color: #1665b4;
    font-size: 14px;
    line-height: 15px;
    font-weight: 700;
    letter-spacing: -0.8px;
  }
`;
const TelegramDot = styled.span`
  width: 33px;
  height: 34px;
  border-radius: 50%;
  background: linear-gradient(#2aa5e3, #1b86c8);
  display: grid;
  place-items: center;
`;
const Notepad = () => (
  <svg width="36" height="36" viewBox="0 0 36 36"><path d="M1 4h24l3 28-26 2z" fill="#f2f2f2" stroke="#999" strokeWidth=".8" /><path d="M2 20h24l1.800 11.500L2.500 33z" fill="#7ed321" /><path d="M2 4h23" stroke="#555" strokeWidth="3" strokeDasharray="1.500 1.500" /><path d="M4 9h8M4 12h6" stroke="#999" strokeWidth="1" /><path d="M6 22c4-5 8-5 12-1s-5 5-9 1M7 29h7M17 28h8v-3M14 14a3 3 0 1 0 6 0 3 3 0 1 0-6 0M18 20l4-4" stroke="#1c2b16" strokeWidth="1.400" fill="none" /><path d="M33.500 3 25 25l-1 4 3-3L35.500 4z" fill="#f5a623" stroke="#9a6200" strokeWidth=".6" /></svg>
);
const ChatMark = styled.span`
  width: 36px;
  height: 38px;
  display: grid;
  & > * {
    grid-area: 1 / 1;
  }
  span {
    width: 21px;
    height: 21px;
    margin: 7px 0 0 7px;
    border-radius: 50%;
    background: #fff;
    color: #1d6fb8;
    font-size: 12px;
    font-weight: 700;
    line-height: 21px;
    text-align: center;
    letter-spacing: -0.6px;
  }
`;
const ChatShape = () => (
  <svg width="36" height="38" viewBox="0 0 36 38"><defs><linearGradient id="chat" x2="0" y2="1"><stop stopColor="#ffb35c" /><stop offset="1" stopColor="#f4751b" /></linearGradient></defs><path d="M9 2.500C14 1.500 21 1.500 27 2.500c4 .6 6 2.500 6.500 6.500.6 5 .6 9 0 14-.5 4-2.500 5.500-5 6.200L28.500 36l-8.500-6c-4 .3-7 .1-11-.5-4-.6-6-2.500-6.500-6.500-.6-5-.6-9 0-14C3 5 5 3.100 9 2.500z" fill="url(#chat)" stroke="#ffe6cc" strokeWidth="1.500" strokeLinejoin="round" /></svg>
);

function WindowsBar() {
  return (
    <Taskbar>
      <Weather>
        <svg width="36" height="32" viewBox="0 0 36 32"><defs><linearGradient id="sun" x2=".3" y2="1"><stop stopColor="#ffd21c" /><stop offset="1" stopColor="#ec6a0c" /></linearGradient></defs><circle cx="19" cy="16" r="15" fill="url(#sun)" /><path d="M8 6.500h5M8 13h26M2 19h16M25 19h5M2 25.500h26" stroke="#77726c" strokeWidth="2.600" strokeLinecap="round" /></svg>
        <Badge $x={47} $y={4} $s={24} $bg="#ff99a4" $c="#111">1</Badge>
      </Weather>
      <Tile><Start /></Tile>
      <Tile><Magnifier /></Tile>
      <Tile><TaskView /></Tile>
      <Tile><Copilot /></Tile>
      <Tile><Explorer /><Running /></Tile>
      <Tile><Edge /></Tile>
      <Tile><Store /></Tile>
      <Tile><Shield /></Tile>
      <Tile $bg="#3a343b"><Chrome /><Running $w={24} $c="#adabaa" /></Tile>
      <Tile><Teams /><Running />
        <Badge $x={31} $y={5} $s={23} $bg="#13a10e" $c="#fff"><svg width="12" height="10" viewBox="0 0 12 10"><path d="m1.500 5 3 3L10.500 2" fill="none" stroke="#0a2a08" strokeWidth="2" /></svg></Badge>
        <Badge $x={29} $y={28} $s={18} $bg="#e6ecdc" $c="#31402c" $fs={9}>OA</Badge>
      </Tile>
      <Tile><FaWhatsapp size={38} color="#25d366" /><Running /><Badge $x={27} $y={4} $s={24} $p={6} $bg="#a5a5a3" $c="#111" $fs={18}>38</Badge></Tile>
      <Tile><Bubble><span>24</span></Bubble><Running /><Badge $x={32} $y={5} $s={23} $bg="#1c2230" $c="#fff" $border="1px solid #b5bcc0">7</Badge></Tile>
      <Tile $bg="#81464a"><TelegramDot><FaTelegramPlane size={19} color="#fff" /></TelegramDot><Running $c="#ff99a4" /><Badge $x={33} $y={8} $s={22} $bg="#f23c34" $c="#fff">38</Badge></Tile>
      <Tile><Notepad /><Running /></Tile>
      <Tile $bg="#81464a"><ChatMark><ChatShape /><span>24</span></ChatMark><Running $c="#ff99a4" /></Tile>
      <Tray>
        <TraySlot><svg width="17" height="10" viewBox="0 0 17 10"><path d="m1 9 7.500-7.500L16 9" fill="none" stroke="#fff" strokeWidth="2" /></svg></TraySlot>
        <TraySlot><svg width="25" height="25" viewBox="0 0 25 25"><circle cx="12" cy="9" r="7.500" fill="#6e7a80" /><circle cx="6.500" cy="13" r="6" fill="#c5cacd" /><path d="M6 11h12v8H6z" fill="#dfe3e5" /><circle cx="17.500" cy="17" r="7.300" fill="#4cc2ff" /><path d="M17.500 12.500v2M17.500 16v5" stroke="#0c2b3a" strokeWidth="2" /></svg></TraySlot>
        <TraySlot><svg width="26" height="28" viewBox="0 0 26 28"><path d="M1.500 13A11.500 11.500 0 0 1 24 9M24 1.500V9h-8M1.500 26.500V19h8M1.500 19A11.500 11.500 0 0 0 14 27" fill="none" stroke="#fff" strokeWidth="1.500" /><circle cx="19" cy="21" r="6.500" fill="#0078d7" /></svg></TraySlot>
        <TraySlot $w={66}><span>ENG</span><span>US</span></TraySlot>
        <TraySlot><svg width="25" height="20" viewBox="0 0 25 20"><g fill="none" stroke="#fff" strokeWidth="1.900"><path d="M.8 7.500a16.500 16.500 0 0 1 23.400 0M4.500 11a11.500 11.500 0 0 1 16 0M8 14.500a6.500 6.500 0 0 1 9 0" /></g><circle cx="12.500" cy="17.500" r="2" fill="#fff" /></svg></TraySlot>
        <TraySlot $w={25}><svg width="25" height="22" viewBox="0 0 25 22"><path d="M1 8h4l6-5.500v17L5 14H1zM14 7.500a5 5 0 0 1 0 7M17 4.500a9 9 0 0 1 0 13M20 2a13 13 0 0 1 0 18" fill="none" stroke="#fff" strokeWidth="1.700" strokeLinejoin="round" /></svg></TraySlot>
        <TraySlot><svg width="25" height="20" viewBox="0 0 25 20"><rect x="1.500" y="4.500" width="19" height="13.500" rx="3" fill="none" stroke="#fff" strokeWidth="1.800" /><rect x="4.500" y="7.500" width="13" height="7.500" fill="#fff" /><path d="M21.500 8.500h2.500v6h-2.500z" fill="#fff" /><path d="M6.500-.5 0 8h4l-1.500 6L9 5.500H5.500z" fill="#fff" stroke="#132a2e" strokeWidth="1" /></svg></TraySlot>
        <TraySlot $w={105} $j="end"><span>14:02</span><span>09/12/2024</span></TraySlot>
        <TraySlot $w={46}><svg width="21" height="24" viewBox="0 0 21 24"><path d="M0 19.500c2-1.500 2.300-4 2.300-10a8.200 8.200 0 0 1 16.400 0c0 6 .3 8.500 2.300 10zM7 21h7a3.500 3.500 0 0 1-7 0z" fill="#e2e2e2" /></svg></TraySlot>
      </Tray>
    </Taskbar>
  );
}

export default function App() {
  return (
    <Screen>
      <Global />
      <Browser />
      <Header />
      <Body>
        <Sidebar />
        <Main>
          <SecurityGroups />
          <InboundRules />
        </Main>
      </Body>
      <Footer>
        <Shell />
        <FooterText $l={8}>CloudShell</FooterText>
        <FooterText $l={37} $ls={-0.5} $up={1}>Feedback</FooterText>
        <FooterText $push $ls={-0.2} $up={1}>© 2024, Amazon Web Services, Inc. or its affiliates.</FooterText>
        <FooterText $l={44} $up={1}>Privacy</FooterText>
        <FooterText $l={38} $ls={-0.6} $up={1}>Terms</FooterText>
        <FooterText $l={38} $ls={-0.42} $up={1}>Cookie preferences</FooterText>
      </Footer>
      <WindowsBar />
    </Screen>
  );
}
